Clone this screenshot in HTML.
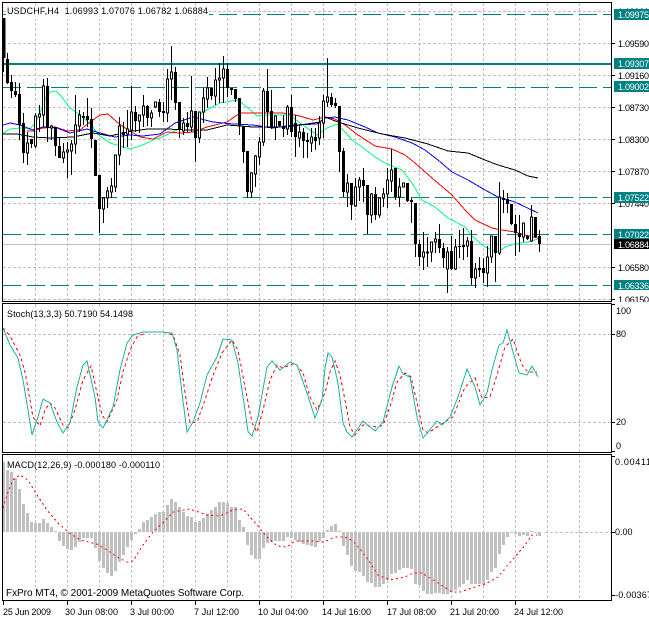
<!DOCTYPE html>
<html>
<head>
<meta charset="utf-8">
<style>
html,body{margin:0;padding:0;background:#fff;width:649px;height:618px;overflow:hidden}
svg{display:block}
text{font-family:"Liberation Sans",sans-serif;font-size:9px;fill:#000}
.w{fill:#fff}
.c{font-size:10px}
</style>
</head>
<body>
<svg width="649" height="618" viewBox="0 0 649 618" xmlns="http://www.w3.org/2000/svg">
<rect width="649" height="618" fill="#fff"/>
<g shape-rendering="crispEdges" fill="none">
<!-- grid -->
<path stroke="#c0c0c0" stroke-dasharray="3 2" d="M3 11.5H611M3 43.5H611M3 75.5H611M3 107.5H611M3 139.5H611M3 171.5H611M3 203.5H611M3 267.5H611M3 299.5H611
M3 334.5H611M3 422.5H611M545 532.5H611"/>
<path stroke="#c0c0c0" stroke-dasharray="3 2" d="M35.5 3V301M67.5 3V301M99.5 3V301M131.5 3V301M163.5 3V301M195.5 3V301M227.5 3V301M259.5 3V301M291.5 3V301M323.5 3V301M355.5 3V301M387.5 3V301M419.5 3V301M451.5 3V301M483.5 3V301M515.5 3V301M547.5 3V301M579.5 3V301
M35.5 304V452M67.5 304V452M99.5 304V452M131.5 304V452M163.5 304V452M195.5 304V452M227.5 304V452M259.5 304V452M291.5 304V452M323.5 304V452M355.5 304V452M387.5 304V452M419.5 304V452M451.5 304V452M483.5 304V452M515.5 304V452M547.5 304V452M579.5 304V452
M35.5 455V600M67.5 455V600M99.5 455V600M131.5 455V600M163.5 455V600M195.5 455V600M227.5 455V600M259.5 455V600M291.5 455V600M323.5 455V600M355.5 455V600M387.5 455V600M419.5 455V600M451.5 455V600M483.5 455V600M515.5 455V600M547.5 455V600M579.5 455V600"/>
<!-- levels -->
<path stroke="#008080" stroke-dasharray="18 6" d="M3 14.5H611M3 87.5H611M3 197.5H611M3 234.5H611M3 285.5H611"/>
<path stroke="#008080" stroke-width="2" d="M3 64H611"/>
<path stroke="#c0c0c0" d="M3 244.5H611"/>
<!-- MAs -->
<path stroke="#00ff7f" d="M3 133L10 129L20 128L30 129L35 123L40 113L45 100L50 92L56 91L62 97L70 108L80 115L90 124L100 136L110 143L120 146L130 149L137 147L145 144L155 139L160 138L177 130L193 122L203 112L220 103L238 100L247 107L257 116L273 115L290 115L300 123L317 135L327 128L337 124L345 132L352 140L362 147L375 157L385 163L402 170L412 183L422 200L435 207L448 218L465 227L473 237L485 247L498 252L505 247L515 244L528 242L538 239"/>
<path stroke="#ff0000" d="M27 131L33 131L43 128L55 127L67 131L80 130L90 122L100 115L108 114L117 122L128 130L140 137L153 139L167 132L180 133L193 132L207 127L227 122L240 113L260 113L283 113L300 116L313 120L325 117L335 119L345 125L358 135L375 146L392 149L405 155L415 163L432 178L452 195L465 210L475 220L492 228L502 230L515 232L525 235L538 238"/>
<path stroke="#0000ff" d="M3 125L10 123L20 125L33 130L43 127L57 128L70 133L87 129L100 133L115 137L130 135L143 136L160 134L175 123L193 117L213 122L233 124L253 125L273 128L293 125L317 124L325 118L335 117L348 120L365 127L378 133L395 137L412 143L425 150L438 160L452 172L468 180L485 190L498 197L515 202L538 213"/>
<path stroke="#000000" d="M3 134L17 134L33 137L50 138L73 137L93 133L110 136L127 132L147 129L167 129L187 130L207 130L227 125L253 127L287 127L320 122L325 117L338 122L358 128L382 134L405 138L428 144L448 151L468 153L485 160L498 165L515 170L528 176L538 178"/>
<!-- wicks -->
<path stroke="#000" d="M3.5 18V72M7.5 53V84M11.5 75V98M15.5 82V97M19.5 83V140M23.5 113V163M27.5 132V165M31.5 139V148M35.5 113V148M39.5 105V132M43.5 79V127M47.5 78V142M51.5 125V140M55.5 127V156M59.5 137V158M63.5 143V163M67.5 142V178M71.5 140V175M75.5 95V154M79.5 110V132M83.5 112V125M87.5 98V127M91.5 108V148M95.5 140V176M99.5 175V233M103.5 197V223M107.5 187V208M111.5 178V198M115.5 155V192M119.5 117V165M123.5 122V148M127.5 110V147M131.5 86V140M135.5 106V132M139.5 115V133M143.5 95V127M147.5 105V126M151.5 110V127M155.5 102V108M159.5 99V117M163.5 102V122M167.5 69V122M171.5 46V100M175.5 67V110M179.5 102V138M183.5 118V135M187.5 112V132M191.5 76V132M195.5 111V162M199.5 112V143M203.5 88V123M207.5 77V108M211.5 88V100M215.5 68V105M219.5 63V103M223.5 56V103M227.5 63V97M231.5 88V95M235.5 89V102M239.5 98V135M243.5 126V163M247.5 151V198M251.5 172V198M255.5 155V187M259.5 137V165M263.5 88V146M267.5 69V128M271.5 90V129M275.5 116V140M279.5 121V127M283.5 115V137M287.5 105V135M291.5 95V137M295.5 115V157M299.5 125V147M303.5 128V158M307.5 133V158M311.5 128V152M315.5 128V150M319.5 116V145M323.5 95V138M327.5 58V107M331.5 93V107M335.5 98V108M339.5 106V172M343.5 148V197M347.5 174V207M351.5 183V220M355.5 178V207M359.5 177V201M363.5 168V202M367.5 185V234M371.5 193V223M375.5 187V220M379.5 198V218M383.5 188V207M387.5 168V208M391.5 149V192M395.5 168V200M399.5 178V207M407.5 183V202M411.5 198V223M415.5 203V257M419.5 240V266M423.5 232V270M427.5 237V267M431.5 242V262M435.5 232V253M439.5 224V253M443.5 243V268M447.5 247V293M451.5 236V270M455.5 239V270M459.5 230V258M463.5 228V260M467.5 237V257M471.5 230V285M475.5 263V288M479.5 257V277M483.5 258V283M487.5 246V287M491.5 236V263M495.5 236V282M499.5 182V255M503.5 190V213M507.5 193V213M511.5 204V225M515.5 215V256M519.5 215V252M523.5 223V242M527.5 235V240M531.5 205V242M535.5 217V238M539.5 230V252"/>
<!-- black bodies -->
<path stroke="#000" stroke-width="3" d="M4 18V58M7.5 59V83M11.5 82V91M15.5 91V95M19.5 94V125M23.5 123V153M31.5 139V144M47.5 86V128M55.5 127V146M59.5 146V158M83.5 116V118M87.5 116V120M91.5 119V139M95.5 140V176M99.5 175V209M123.5 132V135M135.5 112V121M147.5 106V118M159.5 102V112M163.5 111V113M175.5 72V103M179.5 102V130M187.5 123V127M195.5 111V138M211.5 88V96M227.5 69V88M231.5 88V90M235.5 89V99M239.5 98V126M243.5 126V152M247.5 151V192M267.5 91V112M271.5 111V127M279.5 121V126M283.5 127V129M291.5 107V132M295.5 123V137M303.5 132V141M307.5 140V142M315.5 137V141M331.5 97V105M335.5 103V106M339.5 106V152M343.5 151V192M351.5 183V205M363.5 180V186M367.5 185V215M375.5 194V215M395.5 168V197M407.5 183V201M411.5 200V202M415.5 203V244M419.5 244V257M439.5 239V248M443.5 248V258M451.5 251V269M459.5 246V247M463.5 245V247M471.5 241V278M479.5 268V270M483.5 268V273M495.5 236V253M503.5 198V200M507.5 199V204M511.5 204V224M515.5 224V233M519.5 233V237M527.5 236V239M535.5 217V237M539.5 236V244"/>
<!-- white bodies -->
<path stroke="#000" fill="#fff" d="M26.5 143h2v10h-2zM34.5 116h2v30h-2zM38.5 114h2v3h-2zM42.5 86h2v29h-2zM50.5 126h2v2h-2zM62.5 152h2v6h-2zM66.5 150h2v2h-2zM70.5 144h2v7h-2zM74.5 125h2v19h-2zM78.5 115h2v11h-2zM102.5 198h2v11h-2zM106.5 191h2v7h-2zM110.5 186h2v6h-2zM114.5 155h2v32h-2zM118.5 126h2v29h-2zM126.5 129h2v5h-2zM130.5 112h2v18h-2zM138.5 115h2v6h-2zM142.5 106h2v9h-2zM150.5 113h2v5h-2zM154.5 102h2v5h-2zM166.5 79h2v34h-2zM170.5 72h2v7h-2zM182.5 123h2v8h-2zM190.5 111h2v16h-2zM198.5 112h2v26h-2zM202.5 98h2v14h-2zM206.5 88h2v11h-2zM214.5 80h2v16h-2zM218.5 78h2v2h-2zM222.5 69h2v9h-2zM250.5 173h2v19h-2zM254.5 156h2v18h-2zM258.5 142h2v15h-2zM262.5 91h2v51h-2zM274.5 116h2v11h-2zM286.5 107h2v22h-2zM298.5 132h2v6h-2zM310.5 137h2v6h-2zM318.5 123h2v15h-2zM322.5 101h2v22h-2zM326.5 97h2v5h-2zM346.5 183h2v9h-2zM354.5 187h2v19h-2zM358.5 180h2v7h-2zM370.5 194h2v21h-2zM378.5 198h2v17h-2zM382.5 194h2v4h-2zM386.5 180h2v14h-2zM390.5 170h2v11h-2zM398.5 187h2v10h-2zM402.5 183h2v4h-2zM422.5 252h2v5h-2zM426.5 252h2v1h-2zM430.5 242h2v10h-2zM434.5 239h2v3h-2zM446.5 252h2v17h-2zM454.5 247h2v22h-2zM466.5 241h2v5h-2zM474.5 269h2v9h-2zM486.5 257h2v16h-2zM490.5 236h2v21h-2zM498.5 197h2v56h-2zM522.5 223h2v14h-2zM530.5 217h2v24h-2z"/>
<!-- stochastic -->
<path stroke="#ff0000" stroke-dasharray="3 3" d="M3 328L10 336L20 355L25 372L30 400L33 417L40 426L45 410L50 403L55 408L63 425L68 428L75 410L83 380L91 366L97 393L102 415L107 422L117 400L123 372L130 350L137 337L147 332L163 332L173 335L180 355L185 393L190 423L197 422L205 400L212 378L222 353L232 340L238 350L245 387L252 423L257 432L263 410L270 380L277 365L283 368L295 363L303 373L310 397L317 410L325 393L330 372L335 361L340 375L345 400L350 427L355 435L363 425L377 427L383 425L390 407L397 382L405 373L411 377L418 407L423 430L428 433L440 425L453 417L465 387L475 378L482 398L490 397L497 375L505 347L513 339L522 365L528 372L537 372"/>
<path stroke="#20b2aa" d="M3 328L10 345L18 358L23 380L28 410L32 435L38 417L43 399L50 403L57 422L63 433L70 423L77 387L83 365L87 361L95 397L98 422L103 428L113 407L120 370L127 343L133 335L143 332L160 332L172 333L177 350L182 393L187 432L193 422L200 403L207 375L217 357L223 339L232 340L238 363L245 410L248 432L252 436L258 417L267 367L272 361L280 370L290 362L297 365L307 393L315 418L322 400L325 368L328 353L332 357L338 383L343 423L347 432L352 437L363 421L375 431L383 422L392 387L399 366L403 374L410 377L417 417L423 438L437 421L442 425L450 417L458 397L467 369L475 387L480 405L487 393L492 370L499 345L503 343L507 330L513 352L519 373L527 375L532 366L538 377"/>
<!-- MACD hist -->
<path stroke="#c0c0c0" stroke-width="3" d="M3.5 532V462M7.5 532V465M11.5 532V472M15.5 532V478M19.5 532V489M23.5 532V504M27.5 532V513M31.5 532V522M35.5 532V523M39.5 532V523M43.5 532V519M47.5 532V523M51.5 532V527M55.5 532V531M59.5 532V541M63.5 532V546M67.5 532V549M71.5 532V550M75.5 532V547M79.5 532V542M83.5 532V538M87.5 532V538M91.5 532V538M95.5 532V548M99.5 532V561M103.5 532V568M107.5 532V573M111.5 532V576M115.5 532V571M119.5 532V562M123.5 532V555M127.5 532V547M131.5 532V540M135.5 532V534M139.5 532V529M143.5 532V522M147.5 532V520M151.5 532V517M155.5 532V514M159.5 532V512M163.5 532V512M167.5 532V505M171.5 532V499M175.5 532V502M179.5 532V507M183.5 532V512M187.5 532V516M191.5 532V517M195.5 532V522M199.5 532V521M203.5 532V518M207.5 532V514M211.5 532V510M215.5 532V507M219.5 532V502M223.5 532V502M227.5 532V503M231.5 532V507M235.5 532V507M239.5 532V520M243.5 532V527M247.5 532V545M251.5 532V555M255.5 532V559M259.5 532V559M263.5 532V548M267.5 532V543M271.5 532V542M275.5 532V541M279.5 532V541M283.5 532V541M287.5 532V537M291.5 532V538M295.5 532V540M299.5 532V542M303.5 532V544M307.5 532V545M311.5 532V546M315.5 532V547M319.5 532V541M323.5 532V538M327.5 532V530M331.5 532V526M335.5 532V524M339.5 532V531M343.5 532V546M347.5 532V555M351.5 532V566M355.5 532V571M359.5 532V572M363.5 532V576M367.5 532V582M371.5 532V583M375.5 532V587M379.5 532V587M383.5 532V584M387.5 532V580M391.5 532V574M395.5 532V573M399.5 532V570M403.5 532V568M407.5 532V568M411.5 532V569M415.5 532V584M419.5 532V585M423.5 532V591M427.5 532V594M431.5 532V594M435.5 532V593M439.5 532V593M443.5 532V594M447.5 532V594M451.5 532V592M455.5 532V590M459.5 532V587M463.5 532V584M467.5 532V580M471.5 532V584M475.5 532V584M479.5 532V584M483.5 532V584M487.5 532V580M491.5 532V572M495.5 532V568M499.5 532V554M503.5 532V545M507.5 532V537M511.5 532V533M515.5 532V534M519.5 532V536M523.5 532V535M527.5 532V536M531.5 532V531M535.5 532V533M539.5 532V536"/>
<path stroke="#ff0000" stroke-dasharray="2 3" d="M3 508L8 492L13 480L20 475L28 480L37 495L47 510L57 522L68 532L80 540L97 544L107 550L117 557L127 562L133 561L143 545L153 532L163 523L173 512L190 509L207 515L220 516L233 510L243 509L257 525L267 537L277 546L287 547L295 541L310 541L325 542L328 540L335 537L345 537L353 541L365 555L378 575L390 580L405 577L413 573L422 573L438 583L452 592L460 592L472 588L485 584L498 577L508 565L515 557L525 545L532 535L537 535"/>
<!-- text backdrops -->
<rect x="6" y="6" width="203" height="13" fill="#fff"/>
<rect x="6" y="307" width="128" height="12" fill="#fff"/>
<rect x="6" y="459" width="155" height="11" fill="#fff"/>
<rect x="5" y="587" width="240" height="12" fill="#fff"/>
<!-- frames -->
<path stroke="#000" d="M2.5 2.5H611.5V301.5H2.5ZM2.5 303.5H611.5V452.5H2.5ZM2.5 454.5H611.5V600.5H2.5Z"/>
<path stroke="#000" d="M611 43.5H615M611 75.5H615M611 107.5H615M611 139.5H615M611 171.5H615M611 203.5H615M611 267.5H615M611 299.5H615M611 334.5H615M611 422.5H615M611 304.5H615M611 451.5H615M611 456.5H615M611 532.5H615M611 595.5H615
M3.5 600V605M67.5 600V605M131.5 600V605M195.5 600V605M259.5 600V605M323.5 600V605M387.5 600V605M451.5 600V605M515.5 600V605"/>
</g>
<text x="7" y="14" textLength="201" lengthAdjust="spacing" xml:space="preserve">USDCHF,H4  1.06993 1.07076 1.06782 1.06884</text>
<text x="7" y="317" textLength="126" lengthAdjust="spacing">Stoch(13,3,3) 50.7190 54.1498</text>
<text x="7" y="468" textLength="153" lengthAdjust="spacing">MACD(12,26,9) -0.000180 -0.000110</text>
<text class="c" x="6" y="596" textLength="238" lengthAdjust="spacing">FxPro MT4, © 2001-2009 MetaQuotes Software Corp.</text>
<!-- price axis -->
<text x="618" y="15" textLength="31">1.09930</text>
<text x="618" y="47" textLength="31">1.09590</text>
<text x="618" y="79" textLength="31">1.09160</text>
<text x="618" y="111" textLength="31">1.08730</text>
<text x="618" y="143" textLength="31">1.08300</text>
<text x="618" y="175" textLength="31">1.07870</text>
<text x="618" y="207" textLength="31">1.07440</text>
<text x="618" y="271" textLength="31">1.06580</text>
<text x="618" y="303" textLength="31">1.06150</text>
<g shape-rendering="crispEdges">
<rect x="614" y="9" width="35" height="11" fill="#008080"/>
<rect x="614" y="58" width="35" height="11" fill="#008080"/>
<rect x="614" y="81" width="35" height="11" fill="#008080"/>
<rect x="614" y="192" width="35" height="11" fill="#008080"/>
<rect x="614" y="229" width="35" height="10" fill="#008080"/>
<rect x="614" y="239" width="35" height="10" fill="#000"/>
<rect x="614" y="280" width="35" height="10" fill="#008080"/>
</g>
<text class="w" x="618" y="18" textLength="31">1.09975</text>
<text class="w" x="618" y="67" textLength="31">1.09307</text>
<text class="w" x="618" y="90" textLength="31">1.09002</text>
<text class="w" x="618" y="201" textLength="31">1.07522</text>
<text class="w" x="618" y="238" textLength="31">1.07022</text>
<text class="w" x="618" y="248" textLength="31">1.06884</text>
<text class="w" x="618" y="289" textLength="31">1.06336</text>
<rect x="612" y="302" width="37" height="2" fill="#fff"/>
<!-- oscillator axes -->
<text x="616" y="314">100</text>
<text x="616" y="337">80</text>
<text x="616" y="425">20</text>
<text x="616" y="449">0</text>
<text x="615" y="465" textLength="36">0.00411</text>
<text x="615" y="535">0.00</text>
<text x="615" y="598" textLength="37">-0.00367</text>
<!-- time axis -->
<text x="3" y="615" textLength="48">25 Jun 2009</text>
<text x="65" y="615" textLength="53">30 Jun 08:00</text>
<text x="130" y="615" textLength="44">3 Jul 00:00</text>
<text x="194" y="615" textLength="45">7 Jul 12:00</text>
<text x="258" y="615" textLength="50">10 Jul 04:00</text>
<text x="322" y="615" textLength="49">14 Jul 16:00</text>
<text x="387" y="615" textLength="49">17 Jul 08:00</text>
<text x="450" y="615" textLength="49">21 Jul 20:00</text>
<text x="514" y="615" textLength="49">24 Jul 12:00</text>
</svg>
</body>
</html>
